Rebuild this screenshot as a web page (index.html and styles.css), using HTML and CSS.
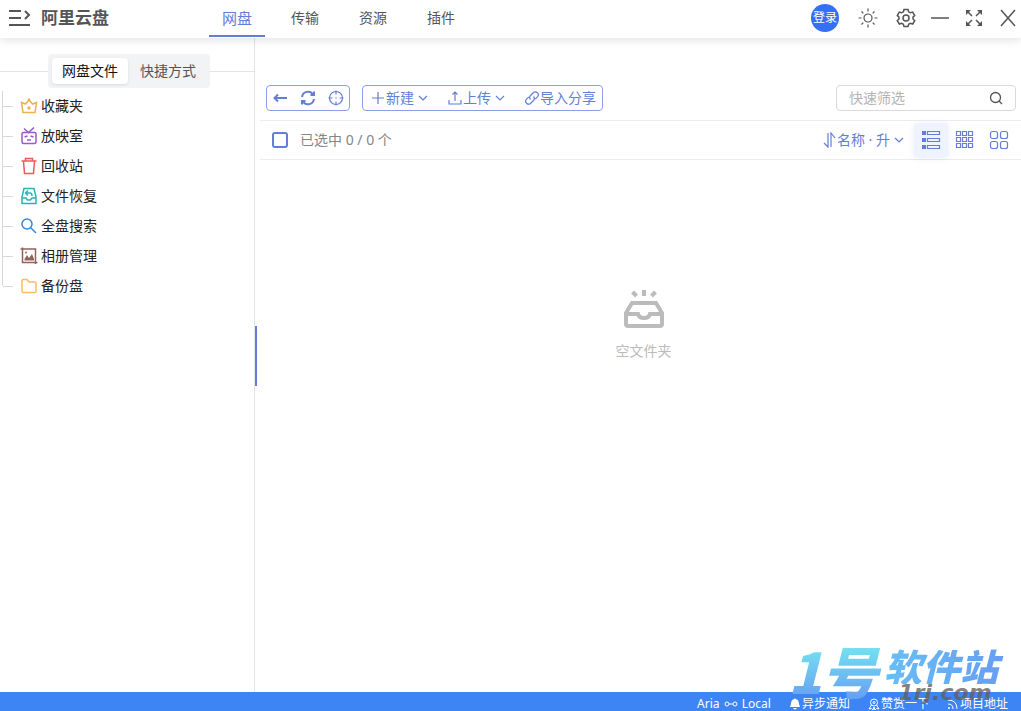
FILE: index.html
```html
<!DOCTYPE html>
<html lang="zh-CN">
<head>
<meta charset="utf-8">
<title>阿里云盘</title>
<link rel="stylesheet" href="styles.css">
</head>
<body>
<div class="app">
  <header class="header">
    <div class="brand">
      <button class="plain menu" aria-label="菜单"><svg width="24" height="20" viewBox="0 0 24 20"><path d="M1 3H13M1 10H13M1 17H22M17 3l4 4-4 4"/></svg></button>
      <h1 class="title">阿里云盘</h1>
    </div>
    <nav class="nav">
      <a class="nav-item nav-active" href="#">网盘</a>
      <a class="nav-item" href="#">传输</a>
      <a class="nav-item" href="#">资源</a>
      <a class="nav-item" href="#">插件</a>
    </nav>
    <div class="window-tools">
      <button class="plain login">登录</button>
      <button class="plain tool theme" aria-label="主题"><svg width="20" height="20" viewBox="0 0 20 20"><circle cx="10" cy="10" r="4"/><path d="M10 .5v3M10 16.500v3M.5 10h3M16.500 10h3M3.500 3.500l1.800 1.800M14.700 14.700l1.800 1.800M3.500 16.500l1.800-1.800M14.700 5.300l1.800-1.800"/></svg></button>
      <button class="plain tool" aria-label="设置"><svg width="20" height="20" viewBox="0 0 20 20"><path d="M8 1.500h4l.6 2.300 1.800 1 2.300-.7 2 3.400-1.700 1.600v1.900l1.700 1.600-2 3.400-2.300-.7-1.800 1-.6 2.300H8l-.6-2.300-1.800-1-2.300.7-2-3.400L3 11V9.100L1.300 7.500l2-3.400 2.300.7 1.800-1z"/><circle cx="10" cy="10" r="3"/></svg></button>
      <button class="plain tool" aria-label="最小化"><svg width="20" height="20" viewBox="0 0 20 20"><path d="M1 10h18"/></svg></button>
      <button class="plain tool" aria-label="最大化"><svg width="20" height="20" viewBox="0 0 20 20"><path d="M3 3l5 5M17 3l-5 5M3 17l5-5M17 17l-5-5"/><path class="solid" d="M2 2h5L2 7zM18 2h-5l5 5zM2 18h5l-5-5zM18 18h-5l5-5z"/></svg></button>
      <button class="plain tool" aria-label="关闭"><svg width="20" height="20" viewBox="0 0 20 20"><path d="M3 2l14 16M17 2L3 18"/></svg></button>
    </div>
  </header>

  <div class="body">
    <aside class="sidebar">
      <div class="tabs-row">
        <div class="tabs">
          <button class="plain tab tab-active">网盘文件</button>
          <button class="plain tab">快捷方式</button>
        </div>
      </div>
      <ul class="tree">
        <li class="node gold"><svg width="18" height="18" viewBox="0 0 18 18"><path d="M1.500 5.500l4 1.500L9 3l3.500 4 4-1.500L15 15.500H3z"/><circle cx="9" cy="11" r="1"/><circle class="solid" cx="9" cy="2.500" r="1.200"/></svg><a href="#">收藏夹</a></li>
        <li class="node purple"><svg width="18" height="18" viewBox="0 0 18 18"><rect x="2" y="5.500" width="14" height="11" rx="1.500"/><path d="M4 1.500l4.500 4L14 .5M4.500 10l3-1M13.500 10l-3-1M7 13h4"/></svg><a href="#">放映室</a></li>
        <li class="node red"><svg width="18" height="18" viewBox="0 0 18 18"><path d="M1.500 4h15M5.500 4V1.500h7V4M3.500 4l1 12.500h9l1-12.500"/></svg><a href="#">回收站</a></li>
        <li class="node teal"><svg width="18" height="18" viewBox="0 0 18 18"><path d="M2 10l2-8.500h10L16 10v6.500H2zM2 11h4l1.500 2h3L12 11h4M6 6h4q2 0 2 3M8 3.500L5.500 6 8 8.500"/></svg><a href="#">文件恢复</a></li>
        <li class="node blue"><svg width="18" height="18" viewBox="0 0 18 18"><circle cx="7" cy="7" r="5"/><path d="M10.500 10.500L16 16"/></svg><a href="#">全盘搜索</a></li>
        <li class="node brown"><svg width="18" height="18" viewBox="0 0 18 18"><path d="M.5 2h15v15M2.500 .5v15H17.500"/><path class="solid" d="M4.500 13.500V12L7 8l2 3 3-4 2 5v1.500z"/><circle class="solid" cx="6" cy="5.500" r="1"/></svg><a href="#">相册管理</a></li>
        <li class="node folder"><svg width="18" height="18" viewBox="0 0 18 18"><path d="M2 14.500V3.500q0-1 1-1h4l2 2.500h6q1 0 1 1v8.500q0 1-1 1H3q-1 0-1-1z"/></svg><a href="#">备份盘</a></li>
      </ul>
    </aside>

    <main class="main">
      <div class="toolbar">
        <div class="group group-nav">
          <button class="plain act" aria-label="返回"><svg width="16" height="16" viewBox="0 0 16 16"><path class="bold" d="M2.500 8H15M6 4.500L2.500 8 6 11.500"/></svg></button>
          <button class="plain act" aria-label="刷新"><svg width="16" height="16" viewBox="0 0 16 16"><path class="bold" d="M2 7a6 6 0 0 1 11-2.500M14 9a6 6 0 0 1-11 2.500M14 1.500V5h-3.500M2 14.500V11h3.500"/></svg></button>
          <button class="plain act" aria-label="定位"><svg width="16" height="16" viewBox="0 0 16 16"><circle cx="8" cy="8" r="6.500"/><path d="M8 .5v4M8 11.500v4M.5 8h4M11.500 8h4M7.200 8h1.600"/></svg></button>
        </div>
        <div class="group group-file">
          <button class="plain act"><svg width="16" height="16" viewBox="0 0 16 16"><path d="M8 2v12M2 8h12"/></svg>新建<svg class="caret" width="10" height="10" viewBox="0 0 10 10"><path d="M1 3l4 4 4-4"/></svg></button>
          <button class="plain act"><svg width="16" height="16" viewBox="0 0 16 16"><path d="M2 10v4h12v-4M8 11V2M5.500 4.500L8 2l2.500 2.500"/></svg>上传<svg class="caret" width="10" height="10" viewBox="0 0 10 10"><path d="M1 3l4 4 4-4"/></svg></button>
          <button class="plain act"><svg width="16" height="16" viewBox="0 0 16 16"><path d="M6.500 9.500a3 3 0 0 1 0-4l3-3a3 3 0 0 1 4.200 4.200l-2.500 2.500M9.500 6.500a3 3 0 0 1 0 4l-3 3a3 3 0 0 1-4.200-4.200l2.500-2.500"/></svg>导入分享</button>
        </div>
        <label class="search"><input type="text" placeholder="快速筛选" aria-label="快速筛选"><svg width="14" height="14" viewBox="0 0 14 14"><circle cx="6.500" cy="6.500" r="5"/><path d="M10 10l3 3"/></svg></label>
      </div>

      <div class="list-head">
        <label class="select-all"><input type="checkbox" class="check"><span>已选中 0 / 0 个</span></label>
        <button class="plain act sort"><svg width="14" height="16" viewBox="0 0 14 16"><path d="M1 11l4 4V1M8 15V1l4 5"/></svg>名称 · 升<svg class="caret" width="10" height="10" viewBox="0 0 10 10"><path d="M1 3l4 4 4-4"/></svg></button>
        <div class="views">
          <button class="plain view view-active" aria-label="列表"><svg width="20" height="20" viewBox="0 0 20 20"><path class="solid" d="M1 1h4v4H1zM1 8h4v4H1zM1 15h4v4H1z"/><path d="M6.500 1.500h12v3h-12zM6.500 8.500h12v3h-12zM6.500 15.500h12v3h-12z"/></svg></button>
          <button class="plain view" aria-label="小图"><svg width="20" height="20" viewBox="0 0 20 20"><path d="M1.500 1.500h4v4h-4zM7.500 1.500h4v4h-4zM13.500 1.500h4v4h-4zM1.500 7.500h4v4h-4zM7.500 7.500h4v4h-4zM13.500 7.500h4v4h-4zM1.500 13.500h4v4h-4zM7.500 13.500h4v4h-4zM13.500 13.500h4v4h-4z"/></svg></button>
          <button class="plain view" aria-label="大图"><svg width="20" height="20" viewBox="0 0 20 20"><rect x="1.500" y="1.500" width="7" height="7" rx="2"/><rect x="11.500" y="1.500" width="7" height="7" rx="2"/><rect x="1.500" y="11.500" width="7" height="7" rx="2"/><rect x="11.500" y="11.500" width="7" height="7" rx="2"/></svg></button>
        </div>
      </div>

      <div class="empty">
        <svg width="42" height="40" viewBox="0 0 42 40"><path d="M3 23l6-10h24l6 10v11q0 2-2 2H5q-2 0-2-2zM3 24h12q1 4 6 4t6-4h12M21 0v6M9.500 2l4 4M32.500 2l-4 4"/></svg>
        <p>空文件夹</p>
      </div>
    </main>
  </div>

  <footer class="footer">
    <a href="#">Aria <svg width="14" height="12" viewBox="0 0 14 12"><circle cx="3" cy="6" r="2"/><circle cx="11" cy="6" r="2"/><path d="M5 6h4"/></svg> Local</a>
    <a href="#"><svg width="12" height="12" viewBox="0 0 12 12"><path class="solid" d="M5 1q1-1 2 0 3 1 3 5l1 3H1l1-3q0-4 3-5zM4 10h4q-2 3-4 0z"/></svg>异步通知</a>
    <a href="#"><svg width="12" height="12" viewBox="0 0 12 12"><circle cx="6" cy="4.500" r="3.500"/><circle cx="6" cy="4.500" r="1"/><path d="M3.500 7L1 11l2.500-.5L5 12l1-3 1 3 1.500-1.500L11 11 8.500 7"/></svg>赞赏一下</a>
    <a href="#"><svg width="12" height="12" viewBox="0 0 12 12"><path d="M1 2q9 0 9 9M1 6q5 0 5 5"/><circle class="solid" cx="2" cy="10" r="1"/></svg>项目地址</a>
  </footer>

  <div class="splitter"></div>
  <div class="mark">
    <span class="mark-big">1号</span>
    <div class="mark-side"><span class="mark-name">软件站</span><span class="mark-url">1rj.com</span></div>
  </div>
</div>
</body>
</html>
```
FILE: styles.css
```css
* { box-sizing: border-box; }
body {
  margin: 0;
  font: 14px/20px "Noto Sans", "Noto Sans CJK SC", sans-serif;
  color: #222;
  background: #fff;
}
a { color: inherit; text-decoration: none; }
svg { fill: none; stroke: currentColor; flex: none; }
svg .solid { fill: currentColor; stroke: none; }
svg .bold { stroke-width: 2; }
.plain {
  display: flex;
  align-items: center;
  justify-content: center;
  padding: 0;
  border: 0;
  background: none;
  color: inherit;
  font: inherit;
  white-space: nowrap;
}
.app {
  position: relative;
  display: flex;
  flex-direction: column;
  height: 100vh;
  overflow: hidden;
}

.header {
  display: flex;
  height: 38px;
  color: #555;
  box-shadow: 0 1px 10px rgba(0, 0, 0, 0.14);
  z-index: 1;
}
.brand { display: flex; align-items: center; gap: 9px; width: 203px; padding: 0 0 2px 8px; }
.menu svg { stroke-width: 2; }
.title { margin: 0; font-size: 17px; line-height: 24px; font-weight: 700; }
.nav { display: flex; }
.nav-item {
  width: 56px;
  height: 37px;
  margin: 0 6px;
  line-height: 36px;
  text-align: center;
}
.nav-active { font-size: 15px; color: #637dd8; border-bottom: 2px solid #637dd8; }
.window-tools { display: flex; align-items: center; gap: 8px; margin-left: auto; padding-bottom: 2px; }
.tool { width: 26px; height: 28px; }
.tool svg { stroke-width: 1.500; }
.theme { margin: 0 4px 0 8px; }
.theme svg { stroke-width: 1.200; }
.login {
  width: 28px;
  height: 28px;
  border-radius: 50%;
  background: #3370f5;
  color: #fff;
  font-size: 12px;
}

.body { display: flex; flex: 1; min-height: 0; }
.sidebar { width: 255px; padding-top: 16px; border-right: 1px solid #e3e4e8; }
.tabs-row { display: flex; align-items: center; }
.tabs-row::before { content: ""; width: 48px; height: 1px; background: #e3e4e8; }
.tabs-row::after { content: ""; flex: 1; height: 1px; background: #e3e4e8; }
.tabs { display: flex; gap: 2px; padding: 4px; border-radius: 4px; background: #f2f3f5; color: #555; }
.tab { width: 76px; height: 26px; border-radius: 4px; }
.tab-active { background: #fff; color: #111; box-shadow: 0 1px 3px rgba(0, 0, 0, 0.1); }
.tree { margin: 3px 0 0; padding: 0 0 0 2px; list-style: none; }
.node { display: flex; align-items: center; height: 30px; border-left: 1px solid #d6d8dd; }
.node::before { content: ""; width: 10px; height: 1px; margin-right: 7px; background: #d6d8dd; }
.node:last-child { border-left-color: transparent; background: linear-gradient(#d6d8dd, #d6d8dd) left top / 1px 15px no-repeat border-box; }
.node svg { stroke-width: 1.500; }
.node a { margin-left: 3px; color: #222; }
.gold { color: #eeb14e; }
.purple { color: #9a59c9; }
.red { color: #ee5a5a; }
.teal { color: #2bb3b3; }
.blue { color: #3988d6; }
.brown { color: #8f6359; }
.folder { color: #f4bf62; }

.main { display: flex; flex: 1; flex-direction: column; min-width: 0; padding: 47px 0 0 5px; }
.toolbar { display: flex; gap: 12px; padding: 0 5px 9px 6px; }
.group {
  display: flex;
  align-items: center;
  height: 26px;
  border: 1px solid #8a9fe6;
  border-radius: 4px;
}
.group-nav { gap: 12px; padding: 0 5px; }
.group-file { gap: 19px; padding: 0 6px 0 7px; }
.act { color: #637dd8; }
.act svg { stroke-width: 1.200; }
.caret { margin-left: 4px; }
.search {
  display: flex;
  align-items: center;
  width: 180px;
  height: 26px;
  margin-left: auto;
  padding: 0 12px;
  border: 1px solid #d9d9d9;
  border-radius: 4px;
  color: #555;
}
.search input { flex: 1; min-width: 0; padding: 0; border: 0; outline: 0; background: none; font: inherit; }
.search input::placeholder { color: #b4b4b4; }
.search svg { stroke-width: 1.300; }
.list-head {
  display: flex;
  align-items: center;
  height: 40px;
  padding: 0 5px 0 12px;
  border-top: 1px solid #ececee;
  border-bottom: 1px solid #ececee;
}
.select-all { display: flex; align-items: center; gap: 12px; color: #868686; }
.check { appearance: none; width: 16px; height: 16px; margin: 0; border: 2px solid #637dd8; border-radius: 3px; background: #fff; }
.sort { margin-left: auto; }
.views { display: flex; margin-left: 10px; }
.view { width: 34px; height: 34px; color: #637dd8; }
.view svg { stroke-width: 1.200; }
.view-active { border-radius: 3px; background: #eff3fe; box-shadow: 0 1px 6px rgba(99, 125, 216, 0.15); }
.empty { display: flex; flex-direction: column; align-items: center; padding: 130px 0 0 6px; color: #bbb; }
.empty svg { stroke-width: 4; }
.empty p { margin: 11px 0 0; }

.footer {
  display: flex;
  justify-content: flex-end;
  gap: 18px;
  height: 19px;
  padding: 3px 13px 0 0;
  background: #3d85f5;
  color: #fff;
  font-size: 12px;
  line-height: 16px;
}
.footer a { display: flex; align-items: center; gap: 1px; height: 16px; padding-top: 2px; white-space: pre; }

.splitter { position: absolute; top: calc(50% - 30px); left: 255px; width: 2px; height: 60px; background: #637dd8; }
.mark {
  position: absolute;
  right: 15px;
  bottom: 9px;
  display: flex;
  font-family: "Noto Sans CJK SC", sans-serif;
  font-style: italic;
  font-weight: 900;
  white-space: nowrap;
  pointer-events: none;
}
.mark-big, .mark-name { color: transparent; background: linear-gradient(#74e0f0, #669cf3); background-clip: text; }
.mark-big { padding: 0 6px; font-size: 56px; line-height: 44px; }
.mark-side { display: flex; flex-direction: column; }
.mark-name { padding-right: 8px; font-size: 38px; line-height: 36px; background-image: linear-gradient(100deg, #69bff5, #669cf3); }
.mark-url { color: rgba(100, 95, 90, 0.8); font: italic 700 22px/18px "DejaVu Sans", sans-serif; text-align: center; }
```
